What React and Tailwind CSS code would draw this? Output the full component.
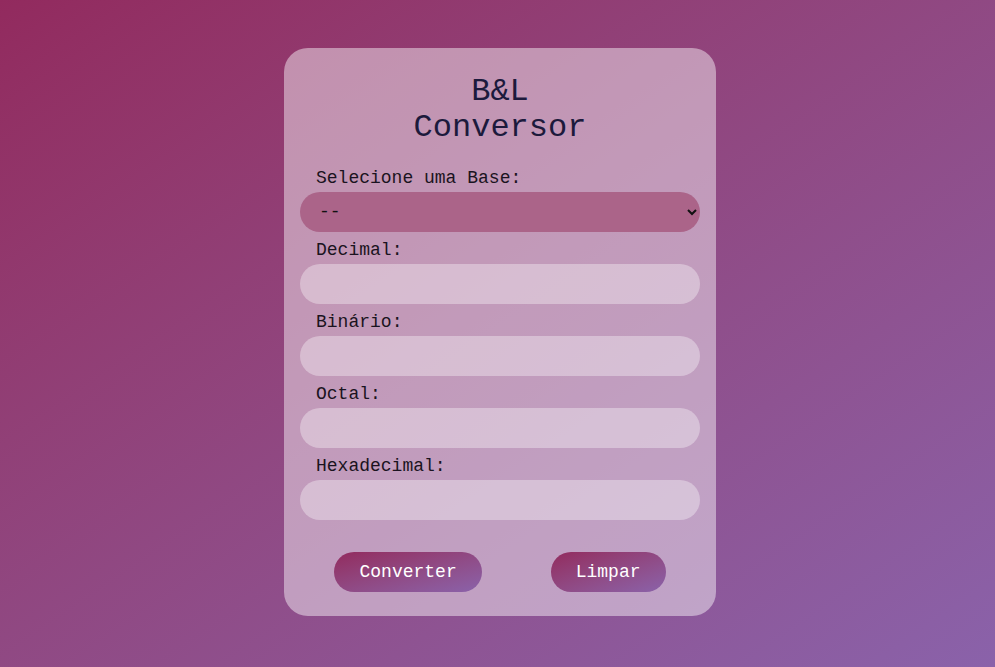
import React, { useState } from "react";

const fields = ["Decimal", "Binário", "Octal", "Hexadecimal"];

const App = () => {
  const [base, setBase] = useState("");
  const [values, setValues] = useState({});

  const limpar = () => {
    setBase("");
    setValues({});
  };

  return (
    <div
      className="min-h-screen flex items-center justify-center pl-[5px] pb-[3px] bg-linear-to-br from-[#922a5e] to-[#8a62aa]"
      style={{ fontFamily: '"Courier New", Courier, "Nimbus Mono PS", "Nimbus Mono L", FreeMono, "Liberation Mono", monospace' }}
    >
      <div className="w-[432px] bg-white/45 rounded-3xl px-4 pt-[26px] pb-6">
        <h1 className="text-center text-[32px] leading-[36px] font-normal text-[#1c1a3c]">
          B&amp;L
          <br />
          Conversor
        </h1>

        <label className="block pl-4 mt-[22px] mb-1 text-[18px] leading-[20px] text-[#1a1320]">
          Selecione uma Base:
        </label>
        <select
          value={base}
          onChange={(e) => setBase(e.target.value)}
          className="w-full h-10 rounded-full bg-[#ab6489] pl-[15px] pr-2 text-[18px] text-[#111] outline-none"
        >
          <option value="">--</option>
          <option value="dec">Decimal</option>
          <option value="bin">Binário</option>
          <option value="oct">Octal</option>
          <option value="hex">Hexadecimal</option>
        </select>

        {fields.map((f) => (
          <div key={f}>
            <label className="block pl-4 mt-2 mb-1 text-[18px] leading-[20px] text-[#1a1320]">
              {f}:
            </label>
            <input
              type="text"
              value={values[f] || ""}
              onChange={(e) => setValues({ ...values, [f]: e.target.value })}
              className="w-full h-10 rounded-full bg-white/35 px-5 text-[18px] outline-none"
            />
          </div>
        ))}

        <div className="flex justify-around mt-8">
          <button className="h-10 px-[25px] rounded-full bg-linear-to-br from-[#922a5e] to-[#8a62aa] text-white text-[18px]">
            Converter
          </button>
          <button
            onClick={limpar}
            className="h-10 px-[25px] rounded-full bg-linear-to-br from-[#922a5e] to-[#8a62aa] text-white text-[18px]"
          >
            Limpar
          </button>
        </div>
      </div>
    </div>
  );
};

export default App;
